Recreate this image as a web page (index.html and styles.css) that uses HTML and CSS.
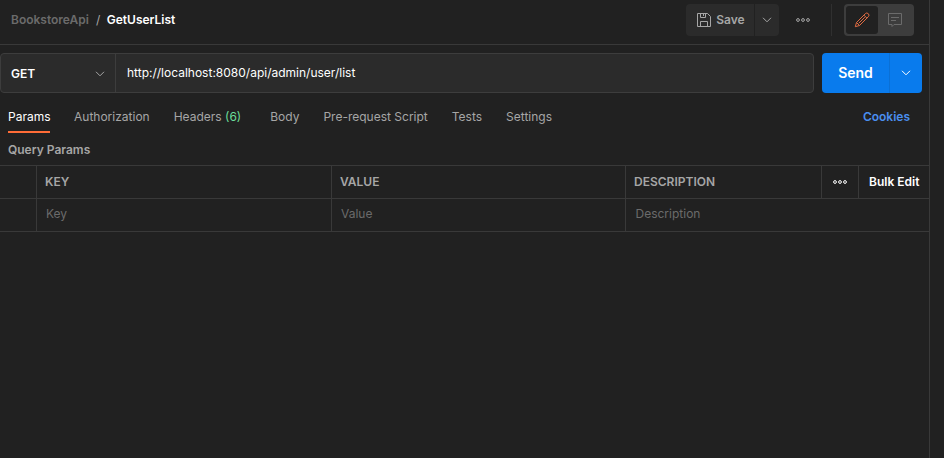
FILE: index.html
```html
<!DOCTYPE html>
<html lang="en">
<head>
<meta charset="utf-8">
<title>GetUserList</title>
<link rel="stylesheet" href="styles.css">
</head>
<body>
<div class="app">
  <main class="pane">
    <header class="topbar">
      <div class="crumbs"><span class="parent">BookstoreApi</span><span class="slash">/</span><span class="current">GetUserList</span></div>
      <div class="save-group">
        <button class="save"><svg width="14" height="14" viewBox="0 0 14 14" fill="none" stroke="currentColor"><path d="M.5.5h10l3 3v10H.5zM3.500.5v4h5v-4M6.500 1v2M3.500 13.500v-5h7v5"/></svg><span>Save</span></button>
        <button class="save-more"><svg width="10" height="6" viewBox="0 0 10 6" fill="none" stroke="currentColor"><path d="M1 .8l4 4 4-4"/></svg></button>
      </div>
      <svg class="dots" width="14" height="4" viewBox="0 0 14 4" fill="none" stroke="currentColor"><circle cx="2" cy="2" r="1.400"/><circle cx="7" cy="2" r="1.400"/><circle cx="12" cy="2" r="1.400"/></svg>
      <div class="mode-wrap">
        <div class="mode">
          <button class="mode-btn active"><svg width="16" height="16" viewBox="0 0 16 16" fill="none" stroke="currentColor" stroke-linejoin="round"><path d="M1.300 14.700l1.200-4.200 8.800-8.800a2.100 2.100 0 0 1 3 3l-8.800 8.800zM9.900 3.100l3 3M2.500 10.500l3 3M10.800 5.200l-6 6"/></svg></button>
          <button class="mode-btn"><svg width="14" height="14" viewBox="0 0 14 14" fill="none" stroke="currentColor"><path d="M.5.5h13v11H6l-2 2v-2H.5zM3 4.500h8M3 7.500h5"/></svg></button>
        </div>
      </div>
    </header>
    <section class="request">
      <div class="url-box">
        <div class="method"><span>GET</span><svg width="10" height="6" viewBox="0 0 10 6" fill="none" stroke="currentColor"><path d="M1 .8l4 4 4-4"/></svg></div>
        <div class="url">http://localhost:8080/api/admin/user/list</div>
      </div>
      <div class="send-group">
        <button class="send">Send</button>
        <button class="send-more"><svg width="10" height="6" viewBox="0 0 10 6" fill="none" stroke="currentColor"><path d="M1 .8l4 4 4-4"/></svg></button>
      </div>
    </section>
    <nav class="tabs">
      <span class="tab selected">Params</span><span class="tab">Authorization</span><span class="tab headers">Headers <b>(6)</b></span><span class="tab">Body</span><span class="tab">Pre-request Script</span><span class="tab">Tests</span><span class="tab">Settings</span><span class="cookies">Cookies</span>
    </nav>
    <h2 class="title">Query Params</h2>
    <div class="table">
      <div class="row head"><span></span><span>KEY</span><span>VALUE</span><span>DESCRIPTION</span><span class="options"><svg width="14" height="4" viewBox="0 0 14 4" fill="none" stroke="currentColor"><circle cx="2" cy="2" r="1.400"/><circle cx="7" cy="2" r="1.400"/><circle cx="12" cy="2" r="1.400"/></svg></span><span class="bulk">Bulk Edit</span></div>
      <div class="row entry"><span></span><span>Key</span><span>Value</span><span class="wide">Description</span></div>
    </div>
  </main>
  <aside class="rail"></aside>
</div>
</body>
</html>
```
FILE: styles.css
```css
* { box-sizing: border-box; }
body { margin: 0; background: #212121; color: #a6a6a6; font: 12px/16px Inter, sans-serif; overflow: hidden; }
button { border: 0; margin: 0; padding: 0; font: inherit; color: inherit; display: flex; align-items: center; justify-content: center; }
svg { display: block; flex: none; }
.app { display: flex; width: 944px; height: 458px; }
.pane { width: 930px; border-right: 1px solid #393939; }
.rail { flex: 1; }
.topbar { display: flex; align-items: center; height: 45px; padding: 0 15px 5px 11px; border-bottom: 1px solid #393939; }
.crumbs { display: flex; font-weight: 600; color: #6b6b6b; }
.slash { margin: 0 6.500px 0 7px; font-weight: 400; color: #a6a6a6; }
.current { color: #fff; letter-spacing: -.01px; }
.save-group { display: flex; gap: 1px; margin-left: auto; }
.save, .save-more { height: 32px; background: #2b2b2b; }
.save { width: 68px; gap: 5px; padding-left: 2px; border-radius: 4px 0 0 4px; font-weight: 600; }
.save-more { width: 24px; border-radius: 0 4px 4px 0; }
.dots { margin-left: 17px; }
.mode-wrap { margin-left: 21px; padding-left: 12px; border-left: 1px solid #303030; }
.mode { display: flex; width: 70px; height: 32px; padding: 2px; border-radius: 4px; background: #3d3d3d; }
.mode-btn { width: 34px; height: 28px; border-radius: 3px; background: none; color: #6b6b6b; }
.mode-btn.active { width: 32px; background: #212121; color: #e06c43; }
.request { display: flex; gap: 8px; padding: 8px 7px 0 0; }
.url-box { display: flex; width: 814px; height: 40px; border: 1px solid #3d3d3d; border-radius: 4px; background: #2b2b2b; color: #fff; }
.method { display: flex; align-items: center; justify-content: space-between; width: 115px; padding: 1px 10px 0 10px; border-right: 1px solid #3d3d3d; font-weight: 600; }
.method svg { color: #a6a6a6; }
.url { padding: 11px; }
.send-group { display: flex; width: 100px; color: #fff; }
.send, .send-more { background: #097bed; height: 40px; }
.send { width: 67px; border-radius: 4px 0 0 4px; font-size: 14px; font-weight: 600; }
.send-more { flex: 1; border-left: 1px solid #0a70d6; border-radius: 0 4px 4px 0; }
.tabs { display: flex; gap: 24px; height: 40px; padding: 0 19px 0 8px; }
.tab { height: 40px; padding-top: 16px; white-space: nowrap; }
.selected { width: 42px; color: #fff; border-bottom: 2px solid #ff6c37; }
.headers { margin-right: 5px; }
.headers b { color: #6bdd9a; font-weight: 400; }
.cookies { margin-left: auto; padding-top: 16px; color: #4a8ff0; font-weight: 600; }
.title { margin: 0; padding: 9px 8px 7px; font-size: 12px; line-height: 16px; font-weight: 600; }
.table { border-top: 1px solid #393939; }
.row { display: grid; grid-template-columns: 37px 295px 294px 196px 37px 70px; height: 33px; border-bottom: 1px solid #393939; }
.row > span { border-right: 1px solid #393939; padding: 8px 8px; }
.row > span:last-child { border-right: 0; }
.head { font-weight: 600; }
.head .options { display: flex; align-items: center; justify-content: center; color: #fff; }
.head .bulk { color: #fff; padding-left: 10px; }
.row.entry { color: #6b6b6b; }
.row.entry > span { padding: 7px 9px; }
.row.entry .wide { grid-column: span 3; padding-left: 9.500px; }
```
